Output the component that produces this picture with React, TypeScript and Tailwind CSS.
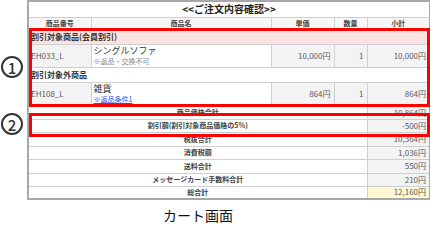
import React from 'react';

const items = [
    {
        group: '割引対象商品(会員割引)',
        groupBg: 'bg-[#fce3e3]',
        code: 'EH033_L',
        name: 'シングルソファ',
        note: '※返品・交換不可',
        link: false,
        price: '10,000円',
        qty: '1',
        subtotal: '10,000円',
        h: 'h-[23px]',
    },
    {
        group: '割引対象外商品',
        groupBg: 'bg-white',
        code: 'EH108_L',
        name: '雑貨',
        note: '※返品条件1',
        link: true,
        price: '864円',
        qty: '1',
        subtotal: '864円',
        h: 'h-[24px]',
    },
];

const totals = [
    { label: '商品価格合計', value: '10,864円', h: 'h-[13px]' },
    { label: '割引額(割引対象商品価格の5%)', value: '-500円', h: 'h-[13px]' },
    { label: '税抜合計', value: '10,364円', h: 'h-[14px]' },
    { label: '消費税額', value: '1,036円', h: 'h-[13px]' },
    { label: '送料合計', value: '550円', h: 'h-[14px]' },
    { label: 'メッセージカード手数料合計', value: '210円', h: 'h-[13px]' },
    { label: '総合計', value: '12,160円', h: 'h-[13px]', grand: true },
];

const cell = 'border border-[#cfcfcf] p-0 leading-none';

const Marker: React.FC<{ n: string; className?: string }> = ({ n, className }) => (
    <div className={`w-[22px] h-[22px] rounded-full border-2 border-[#333] flex items-center justify-center text-[15px] font-medium text-[#333] leading-none ${className ?? ''}`}>
        {n}
    </div>
);

export default function App() {
    return (
        <div className="w-[430px] h-[240px] bg-white overflow-hidden font-['Noto_Sans_CJK_JP','Noto_Sans',sans-serif]">
            <div className="flex">
                {/* annotation numbers */}
                <div className="w-[27px] shrink-0 pl-[1px] pt-[56px]">
                    <Marker n="1" />
                    <Marker n="2" className="mt-[35px]" />
                </div>

                <div className="relative">
                    <table className="border-collapse table-fixed w-[402px] border-2 border-[#a8a8a8] text-[#5a5a5a]">
                        <colgroup>
                            <col className="w-[63px]" />
                            <col className="w-[180px]" />
                            <col className="w-[63px]" />
                            <col className="w-[33px]" />
                            <col className="w-[63px]" />
                        </colgroup>
                        <tbody>
                            <tr className="h-[16px]">
                                <td colSpan={5} className={`${cell} text-center text-[10px] font-bold text-[#222]`}>
                                    &lt;&lt;ご注文内容確認&gt;&gt;
                                </td>
                            </tr>
                            <tr className="h-[12px] bg-[#f6f6f6]">
                                {['商品番号', '商品名', '単価', '数量', '小計'].map(h => (
                                    <td key={h} className={`${cell} text-center text-[7px] font-bold text-[#444]`}>{h}</td>
                                ))}
                            </tr>
                            {items.map(it => (
                                <React.Fragment key={it.code}>
                                    <tr className="h-[15px]">
                                        <td colSpan={5} className={`${cell} ${it.groupBg} pl-[2px] text-[8px] font-bold text-[#333]`}>
                                            {it.group}
                                        </td>
                                    </tr>
                                    <tr className={it.h}>
                                        <td className={`${cell} bg-[#f3f3f3] pl-[2px] text-[8px]`}>{it.code}</td>
                                        <td className={`${cell} bg-white pl-[2px]`}>
                                            <div className="text-[9px] text-[#333] leading-[10px]">{it.name}</div>
                                            <div className={`text-[7px] leading-[10px] ${it.link ? 'text-[#2f4dff] underline' : 'text-[#888]'}`}>{it.note}</div>
                                        </td>
                                        <td className={`${cell} bg-[#f3f3f3] text-right pr-[3px] text-[8px]`}>{it.price}</td>
                                        <td className={`${cell} bg-[#f3f3f3] text-right pr-[3px] text-[8px]`}>{it.qty}</td>
                                        <td className={`${cell} bg-[#f3f3f3] text-right pr-[3px] text-[8px]`}>{it.subtotal}</td>
                                    </tr>
                                </React.Fragment>
                            ))}
                            {totals.map(t => (
                                <tr key={t.label} className={t.h}>
                                    <td colSpan={4} className={`${cell} bg-white text-center text-[7px] font-bold text-[#444]`}>{t.label}</td>
                                    <td className={`${cell} ${t.grand ? 'bg-[#fff8d2]' : 'bg-[#f3f3f3]'} text-right pr-[3px] text-[8px]`}>{t.value}</td>
                                </tr>
                            ))}
                        </tbody>
                    </table>

                    {/* red highlight boxes */}
                    <div className="absolute left-[2px] top-[28px] w-[401px] h-[79px] border-[3px] border-[#ff0000]" />
                    <div className="absolute left-[2px] top-[113px] w-[401px] h-[24px] border-[3px] border-[#ff0000]" />
                </div>
            </div>

            <div className="pl-[163px] pt-[6px] text-[14px] leading-[18px] text-[#111]">カート画面</div>
        </div>
    );
}
